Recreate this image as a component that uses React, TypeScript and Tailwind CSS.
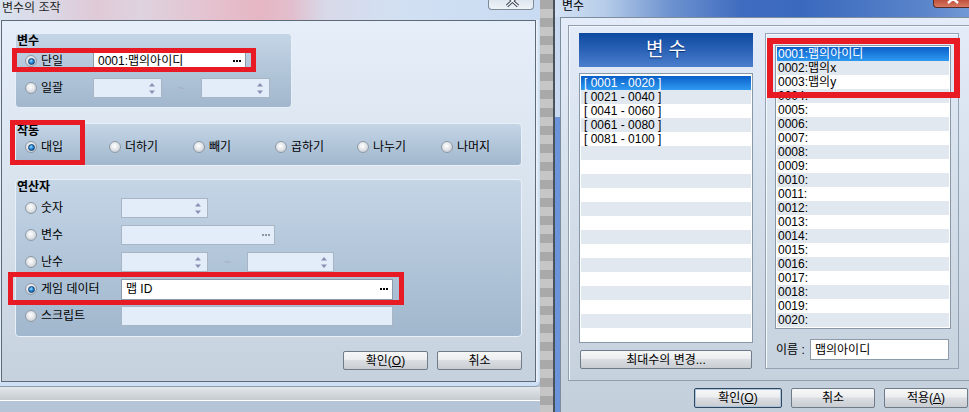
import type { ReactNode } from 'react';

// 라디오 버튼 (윈도우 7 스타일)
const Radio = ({ on = false }: { on?: boolean }) => (
  <span className="w-[12px] h-[12px] rounded-full border border-[#8e9aa7] bg-[radial-gradient(circle_at_45%_40%,#ffffff_0%,#e4e6e9_45%,#b5bcc3_100%)] flex items-center justify-center shrink-0">
    {on && (
      <span className="w-[7px] h-[7px] rounded-full border border-[#0d3d74] bg-[radial-gradient(circle_at_40%_35%,#93d6ff_0%,#1c80d0_55%,#0b4d94_100%)]" />
    )}
  </span>
);

const Arrows = () => (
  <svg width="6" height="11" viewBox="0 0 6 11" className="shrink-0">
    <path d="M3 0L6 3.5H0z" fill="#8a90b4" />
    <path d="M0 7.5H6L3 11z" fill="#8a90b4" />
  </svg>
);

const Spin = ({ w }: { w: string }) => (
  <div className={`${w} h-[20px] shrink-0 border border-[#a7b5c4] bg-[#e3edf9] flex items-center justify-end pr-[6px]`}>
    <Arrows />
  </div>
);

const Dots = ({ dark = false }: { dark?: boolean }) => (
  <span className="flex gap-[1px] ml-auto mr-[4px] self-center">
    <span className={dark ? 'w-[2px] h-[2px] bg-black' : 'w-[2px] h-[2px] bg-[#8a96aa]'} />
    <span className={dark ? 'w-[2px] h-[2px] bg-black' : 'w-[2px] h-[2px] bg-[#8a96aa]'} />
    <span className={dark ? 'w-[2px] h-[2px] bg-black' : 'w-[2px] h-[2px] bg-[#8a96aa]'} />
  </span>
);

const Field = ({ w, h, white = false, text, dots = false }: { w: string; h: string; white?: boolean; text?: string; dots?: boolean }) => (
  <div
    className={`${w} ${h} shrink-0 border flex items-center pl-[4px] text-[12px] leading-none ${
      white ? 'bg-white border-[#8d9cab]' : 'bg-[#e3edf9] border-[#a7b5c4]'
    }`}
  >
    {text && <span>{text}</span>}
    {dots && <Dots dark={white} />}
  </div>
);

const Btn = ({ w, h = 'h-[19px]', focus = false, children }: { w: string; h?: string; focus?: boolean; children: ReactNode }) => (
  <div
    className={`${w} ${h} shrink-0 rounded-[2px] border flex items-center justify-center text-[12px] leading-none bg-[linear-gradient(180deg,#f7f7f7_0%,#ebedef_45%,#dadde1_50%,#c9cdd2_100%)] ${
      focus ? 'border-[#33475c] shadow-[inset_0_0_0_1px_#a9c4de]' : 'border-[#6f7b88]'
    }`}
  >
    {children}
  </div>
);

const Group = ({ title, className, children }: { title: string; className: string; children: ReactNode }) => (
  <div className={`shrink-0 rounded-[4px] border border-[#e8eff7] bg-[linear-gradient(180deg,#c4d5e6_0%,#a1b7cd_100%)] ${className}`}>
    <div className="h-[14px] leading-[14px] pl-[1px] font-bold text-[12px]">{title}</div>
    {children}
  </div>
);

const ops = [
  { label: '대입', w: 'w-[84px]', on: true },
  { label: '더하기', w: 'w-[84px]', on: false },
  { label: '빼기', w: 'w-[82px]', on: false },
  { label: '곱하기', w: 'w-[82px]', on: false },
  { label: '나누기', w: 'w-[84px]', on: false },
  { label: '나머지', w: 'w-[60px]', on: false },
];

const ranges = ['[ 0001 - 0020 ]', '[ 0021 - 0040 ]', '[ 0041 - 0060 ]', '[ 0061 - 0080 ]', '[ 0081 - 0100 ]'];
const names = ['맵의아이디', '맵의x', '맵의y'];

export default function App() {
  return (
    <div className="w-[969px] h-[412px] overflow-hidden flex bg-[#b5c5d7] text-black text-[12px] font-['Liberation_Sans','Noto_Sans_CJK_KR',sans-serif]">
      {/* 왼쪽 창: 변수의 조작 */}
      <div className="w-[540px] h-full flex flex-col shrink-0">
        <div className="h-[20px] flex items-start bg-[linear-gradient(90deg,#d9e3ef_0%,#dbd6e3_10%,#e0c9d7_18%,#ded3df_26%,#e4c3d0_38%,#e6b6c4_48%,#e2becc_54%,#d8d8e8_60%,#d2e0f2_72%,#c9dbf2_100%)]">
          <span className="pl-[2px] pt-[1px] leading-[14px] text-[#1e1e1e]">변수의 조작</span>
          <div className="ml-auto mr-[6px] w-[46px] h-[10px] rounded-b-[4px] border border-t-0 border-[#7c8a99] bg-[linear-gradient(180deg,#dfe6ee,#eef3f8)] overflow-hidden">
            <svg width="46" height="10" viewBox="0 0 46 10">
              <path d="M18 -4L29 6M29 -4L18 6" stroke="#3a4350" strokeWidth="3.2" />
              <path d="M18 -4L29 6M29 -4L18 6" stroke="#ffffff" strokeWidth="1.2" />
            </svg>
          </div>
        </div>
        <div className="flex h-[362px]">
          <div className="w-[1px] bg-[#e4edf8]" />
          <div className="relative w-[535px] h-[362px] shrink-0 border border-[#5d6b79] bg-[linear-gradient(180deg,#e5eef9_0%,#d8e2ed_50%,#c5d1dd_100%)] flex flex-col pl-[13px]">
            {/* 변수 */}
            <Group title="변수" className="mt-[12px] w-[277px] h-[75px]">
              <div className="mt-[4px] h-[18px] flex items-center pl-[9px]">
                <Radio on />
                <span className="ml-[4px] w-[52px] leading-none">단일</span>
                <Field w="w-[153px]" h="h-[18px]" white text="0001:맵의아이디" dots />
              </div>
              <div className="mt-[8px] h-[20px] flex items-center pl-[9px]">
                <Radio />
                <span className="ml-[4px] w-[52px] leading-none">일괄</span>
                <Spin w="w-[69px]" />
                <span className="w-[39px] text-center text-[#a6aec6] leading-none">~</span>
                <Spin w="w-[69px]" />
              </div>
            </Group>

            {/* 작동 */}
            <Group title="작동" className="mt-[15px] w-[507px] h-[43px]">
              <div className="mt-[2px] h-[14px] flex items-center pl-[9px]">
                {ops.map((o) => (
                  <div key={o.label} className={`${o.w} flex items-center shrink-0`}>
                    <Radio on={o.on} />
                    <span className="ml-[4px] leading-none">{o.label}</span>
                  </div>
                ))}
              </div>
            </Group>

            {/* 연산자 */}
            <Group title="연산자" className="mt-[13px] w-[507px] h-[158px]">
              <div className="mt-[4px] h-[20px] flex items-center pl-[9px]">
                <Radio />
                <span className="ml-[4px] w-[80px] leading-none">숫자</span>
                <Spin w="w-[87px]" />
              </div>
              <div className="mt-[7px] h-[20px] flex items-center pl-[9px]">
                <Radio />
                <span className="ml-[4px] w-[80px] leading-none">변수</span>
                <Field w="w-[154px]" h="h-[20px]" dots />
              </div>
              <div className="mt-[7px] h-[20px] flex items-center pl-[9px]">
                <Radio />
                <span className="ml-[4px] w-[80px] leading-none">난수</span>
                <Spin w="w-[87px]" />
                <span className="w-[39px] text-center text-[#a6aec6] leading-none">~</span>
                <Spin w="w-[87px]" />
              </div>
              <div className="mt-[7px] h-[20px] flex items-center pl-[9px]">
                <Radio on />
                <span className="ml-[4px] w-[80px] leading-none">게임 데이터</span>
                <Field w="w-[272px]" h="h-[21px]" white text="맵 ID" dots />
              </div>
              <div className="mt-[7px] h-[20px] flex items-center pl-[9px]">
                <Radio />
                <span className="ml-[4px] w-[80px] leading-none">스크립트</span>
                <Field w="w-[272px]" h="h-[20px]" />
              </div>
            </Group>

            <div className="mt-[14px] flex justify-end gap-[9px] pr-[13px]">
              <Btn w="w-[85px]">
                확인(<span className="underline">O</span>)
              </Btn>
              <Btn w="w-[85px]">취소</Btn>
            </div>

            {/* 빨간 표시 */}
            <div className="absolute left-[10px] top-[27px] w-[244px] h-[24px] border-[5px] border-[#e81a23]" />
            <div className="absolute left-[8px] top-[99px] w-[75px] h-[45px] border-[5px] border-[#e81a23]" />
            <div className="absolute left-[6px] top-[251px] w-[396px] h-[33px] border-[5px] border-[#e81a23]" />
          </div>
          <div className="w-[4px] bg-[linear-gradient(90deg,#eef4fb,#c9dbf1)]" />
        </div>
        <div className="h-[5px] w-[539px] bg-[#cfe0f4] border-b border-[#8d9db0] rounded-br-[4px]" />
        <div className="h-[13px] bg-[linear-gradient(180deg,#e3e7eb,#c6cbd0)]" />
        <div className="h-[1px] bg-white" />
        <div className="flex-1 bg-[#b5c5d7]" />
      </div>

      {/* 사이 배경 */}
      <div className="w-[13px] h-full shrink-0 bg-[repeating-linear-gradient(180deg,#a9a9a9_0px,#a9a9a9_9px,#c6c6c6_9px,#c6c6c6_18px)]" />
      <div className="w-[2px] h-full shrink-0 bg-[#4a525c]" />

      {/* 오른쪽 창: 변수 */}
      <div className="w-[414px] h-full flex flex-col shrink-0">
        <div className="h-[17px] flex items-start bg-[linear-gradient(90deg,#d4e2f4_0%,#b6cce9_12%,#6d92cf_28%,#3f6cbf_45%,#3b69bd_60%,#4a77c4_75%,#5c86cb_90%,#7299d6_100%)]">
          <span className="pl-[7px] leading-[13px]">변수</span>
          <div className="ml-auto w-[36px] h-[8px] rounded-bl-[4px] border border-t-0 border-r-0 border-[#5a2a26] bg-[linear-gradient(180deg,#c0503c,#d87a64)] overflow-hidden">
            <svg width="36" height="8" viewBox="0 0 36 8">
              <path d="M14 -6L24 3M24 -6L14 3" stroke="#ffffff" strokeWidth="2.4" />
            </svg>
          </div>
        </div>
        <div className="flex flex-1">
          <div className="w-[5px] bg-[linear-gradient(180deg,#c9daf1_0px,#c9daf1_100px,#6d93db_100px,#6d93db_100%)]" />
          <div className="flex-1 border-l border-t border-[#7d8d9e] bg-[linear-gradient(180deg,#e3ecf8_0%,#c3cfdb_100%)] flex flex-col pl-[7px] pt-[7px] overflow-hidden">
            <div className="w-[405px] h-[356px] shrink-0 border border-[#8f9fb0] shadow-[inset_1px_1px_0_#f4f8fc] flex items-start">
              {/* 범위 목록 */}
              <div className="ml-[10px] mt-[7px] w-[174px] flex flex-col shrink-0">
                <div className="h-[34px] flex items-center justify-center bg-[linear-gradient(180deg,#0c4aa0_0%,#2a62b6_50%,#4b7ecc_100%)] text-white text-[19px] tracking-[5px] pl-[5px] [text-shadow:0_1px_1px_#0a3070]">
                  변수
                </div>
                <div className="mt-[6px] h-[270px] border border-[#8898a8] bg-white pt-[2px] px-[1px]">
                  {Array.from({ length: 19 }).map((_, i) => (
                    <div
                      key={i}
                      className={`h-[14px] leading-[14px] pl-[3px] whitespace-pre ${
                        i === 0
                          ? 'bg-[linear-gradient(180deg,#0a5fc9,#2f9af1)] text-white'
                          : i % 2
                          ? 'bg-[#e2e8ef]'
                          : 'bg-white'
                      }`}
                    >
                      {ranges[i] ?? ''}
                    </div>
                  ))}
                </div>
                <div className="mt-[7px] ml-[1px]">
                  <Btn w="w-[172px]">최대수의 변경...</Btn>
                </div>
              </div>

              {/* 변수 목록 */}
              <div className="relative ml-[12px] mt-[7px] w-[194px] h-[336px] shrink-0 border border-[#93a3b4] shadow-[inset_1px_1px_0_#f6f9fc] flex flex-col">
                <div className="ml-[9px] mt-[11px] w-[176px] h-[284px] border border-[#8898a8] bg-white pt-[1px] px-[1px]">
                  {Array.from({ length: 20 }).map((_, i) => (
                    <div
                      key={i}
                      className={`h-[14px] leading-[14px] pl-[1px] ${
                        i === 0
                          ? 'bg-[linear-gradient(180deg,#0a5fc9,#2f9af1)] text-white'
                          : i % 2
                          ? 'bg-[#e2e8ef]'
                          : 'bg-white'
                      }`}
                    >
                      {String(i + 1).padStart(4, '0')}:{names[i] ?? ''}
                    </div>
                  ))}
                </div>
                <div className="mt-[10px] h-[21px] flex items-center ml-[10px]">
                  <span className="w-[34px] leading-none">이름 :</span>
                  <Field w="w-[139px]" h="h-[21px]" white text="맵의아이디" />
                </div>
                <div className="absolute left-[1px] top-[4px] w-[193px] h-[60px] border-[6px] border-[#e81a23]" />
              </div>
            </div>

            <div className="mt-[7px] flex gap-[9px] pl-[126px]">
              <Btn w="w-[88px]" h="h-[20px]" focus>
                확인(<span className="underline">O</span>)
              </Btn>
              <Btn w="w-[84px]" h="h-[20px]">취소</Btn>
              <Btn w="w-[84px]" h="h-[20px]">
                적용(<span className="underline">A</span>)
              </Btn>
            </div>
          </div>
        </div>
      </div>
    </div>
  );
}
